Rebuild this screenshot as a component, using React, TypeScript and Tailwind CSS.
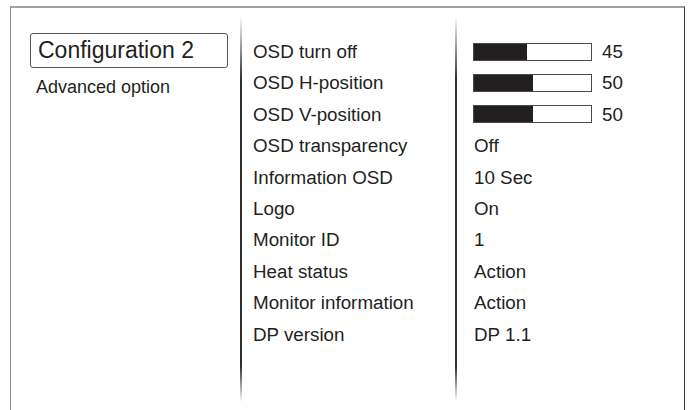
import React from "react";

const rows: { label: string; value?: string; bar?: number }[] = [
  { label: "OSD turn off", bar: 45 },
  { label: "OSD H-position", bar: 50 },
  { label: "OSD V-position", bar: 50 },
  { label: "OSD transparency", value: "Off" },
  { label: "Information OSD", value: "10 Sec" },
  { label: "Logo", value: "On" },
  { label: "Monitor ID", value: "1" },
  { label: "Heat status", value: "Action" },
  { label: "Monitor information", value: "Action" },
  { label: "DP version", value: "DP 1.1" },
];

function Divider() {
  return (
    <div className="w-[2px] shrink-0 bg-[linear-gradient(to_bottom,rgba(40,40,40,0)_2%,#2e2e2e_18%,#2e2e2e_89%,rgba(40,40,40,0)_98%)]" />
  );
}

export default function App() {
  return (
    <div
      className="h-[410px] w-[690px] overflow-hidden bg-white text-[#231f20]"
      style={{ fontFamily: '"Liberation Sans", Arial, sans-serif' }}
    >
      <div className="ml-[10px] mt-[6px] flex h-[404px] w-[675px] border-t-2 border-l border-r border-t-[#a0a0a0] border-l-[#8c8c8c] border-r-[#333333]">
        <div className="flex w-[229px] shrink-0 flex-col pl-[19px] pt-[25px]">
          <div className="flex h-[35px] w-[198px] items-center rounded-[3px] border border-[#555555] pl-[7px] text-[23px] leading-none">
            Configuration 2
          </div>
          <div className="mt-[5px] h-[28px] pl-[6px] text-[18px] leading-[28px]">
            Advanced option
          </div>
        </div>
        <Divider />
        <div className="flex w-[213px] shrink-0 flex-col pl-[11px] pt-[28px]">
          {rows.map((r) => (
            <div key={r.label} className="h-[31.4px] text-[18.8px] leading-[31.4px] whitespace-nowrap">
              {r.label}
            </div>
          ))}
        </div>
        <Divider />
        <div className="flex flex-1 flex-col pl-[16px] pt-[28px]">
          {rows.map((r) => (
            <div key={r.label} className="flex h-[31.4px] items-center text-[18.8px] leading-[31.4px] whitespace-nowrap">
              {r.bar !== undefined ? (
                <>
                  <div className="relative h-[18px] w-[119px] border border-[#4a4a4a] bg-white">
                    <div className="h-full bg-[#231f20]" style={{ width: `${r.bar}%` }} />
                  </div>
                  <span className="ml-[10px]">{r.bar}</span>
                </>
              ) : (
                <span className="pl-[1px]">{r.value}</span>
              )}
            </div>
          ))}
        </div>
      </div>
    </div>
  );
}
